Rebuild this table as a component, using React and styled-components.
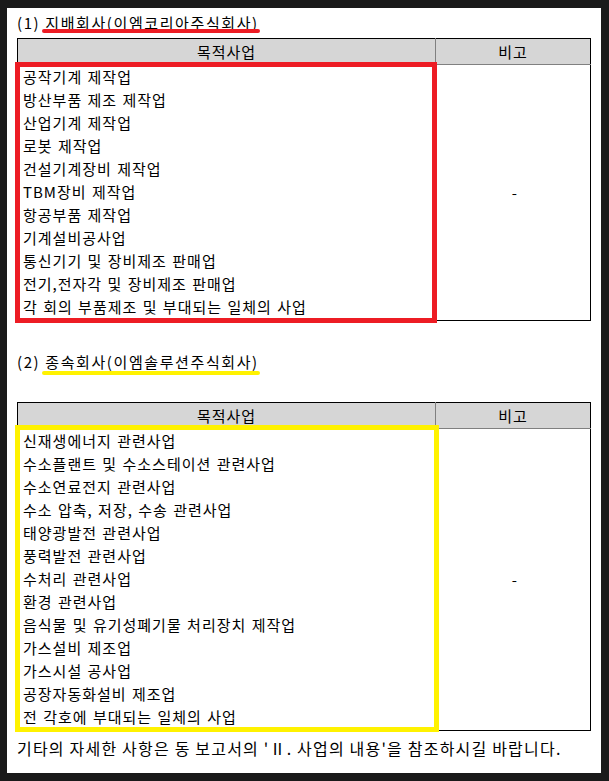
import React from 'react'
import styled, { createGlobalStyle } from 'styled-components'

const GlobalStyle = createGlobalStyle`
  html, body {
    margin: 0;
    padding: 0;
    background: #1a1a1a;
  }
  body {
    font-family: "Noto Sans CJK KR", "Noto Sans", sans-serif;
    color: #000;
  }
`

const Frame = styled.div`
  width: 609px;
  height: 781px;
  box-sizing: border-box;
  padding: 8px 8px 8px 7px;
`

const Sheet = styled.div`
  height: 765px;
  box-sizing: border-box;
  background: #fff;
  padding: 5px 10px 0 10px;
`

const Title = styled.div`
  font-size: 15px;
  line-height: 20px;
  height: 20px;
  letter-spacing: 1.6px;
  white-space: nowrap;
  margin-top: ${p => p.$top || 0}px;
`

const Mark = styled.span`
  position: relative;

  &::after {
    content: '';
    position: absolute;
    left: -3px;
    right: -1px;
    top: ${p => p.$offset}px;
    height: 4px;
    border-radius: 2px;
    background: ${p => p.$color};
  }
`

const TableWrap = styled.div`
  position: relative;
  margin-top: ${p => p.$top}px;
`

const Table = styled.table`
  width: 574px;
  border-collapse: collapse;
  border: 1px solid #000;
  font-size: 15px;
`

const Head = styled.th`
  background: #d6d6d6;
  font-weight: 400;
  height: 25px;
  padding: 0;
  line-height: 25px;
  letter-spacing: 1px;
  border-bottom: 1px solid #808080;
  width: ${p => p.$w}px;

  & + & {
    border-left: 1px solid #808080;
  }
`

const ListCell = styled.td`
  padding: 0 0 2px 5px;
  vertical-align: top;
`

const NoteCell = styled.td`
  text-align: center;
  vertical-align: middle;
  padding: 0 0 0 3px;
`

const Line = styled.div`
  height: 23px;
  line-height: 23px;
  letter-spacing: 1px;
  word-spacing: 1px;
  white-space: nowrap;
`

const Highlight = styled.div`
  position: absolute;
  left: -2px;
  top: ${p => p.$top}px;
  width: ${p => p.$w}px;
  height: ${p => p.$h}px;
  box-sizing: border-box;
  border: 5px solid ${p => p.$color};
  pointer-events: none;
`

const Footer = styled.div`
  margin-top: 7px;
  font-size: 16px;
  line-height: 20px;
  letter-spacing: 1.2px;
  white-space: nowrap;
`

const parent = [
  '공작기계 제작업',
  '방산부품 제조 제작업',
  '산업기계 제작업',
  '로봇 제작업',
  '건설기계장비 제작업',
  'TBM장비 제작업',
  '항공부품 제작업',
  '기계설비공사업',
  '통신기기 및 장비제조 판매업',
  '전기,전자각 및 장비제조 판매업',
  '각 회의 부품제조 및 부대되는 일체의 사업',
]

const child = [
  '신재생에너지 관련사업',
  '수소플랜트 및 수소스테이션 관련사업',
  '수소연료전지 관련사업',
  '수소 압축, 저장, 수송 관련사업',
  '태양광발전 관련사업',
  '풍력발전 관련사업',
  '수처리 관련사업',
  '환경 관련사업',
  '음식물 및 유기성폐기물 처리장치 제작업',
  '가스설비 제조업',
  '가스시설 공사업',
  '공장자동화설비 제조업',
  '전 각호에 부대되는 일체의 사업',
]

const BusinessTable = ({ items, color, boxTop, boxW, boxH, top }) => (
  <TableWrap $top={top}>
    <Table>
      <thead>
        <tr>
          <Head $w={417}>목적사업</Head>
          <Head>비고</Head>
        </tr>
      </thead>
      <tbody>
        <tr>
          <ListCell>
            {items.map(t => <Line key={t}>{t}</Line>)}
          </ListCell>
          <NoteCell>-</NoteCell>
        </tr>
      </tbody>
    </Table>
    <Highlight $color={color} $top={boxTop} $w={boxW} $h={boxH} />
  </TableWrap>
)

export default function App() {
  return (
    <Frame>
      <GlobalStyle />
      <Sheet>
        <Title>
          (1) <Mark $color="#ed1c24" $offset={17}>지배회사(이엠코리아주식회사)</Mark>
        </Title>
        <BusinessTable items={parent} color="#ed1c24" top={5} boxTop={24} boxW={422} boxH={261} />
        <Title $top={31}>
          (2) <Mark $color="#fff200" $offset={20}>종속회사(이엠솔루션주식회사)</Mark>
        </Title>
        <BusinessTable items={child} color="#fff200" top={30} boxTop={23} boxW={424} boxH={307} />
        <Footer>기타의 자세한 사항은 동 보고서의 'Ⅱ. 사업의 내용'을 참조하시길 바랍니다.</Footer>
      </Sheet>
    </Frame>
  )
}
